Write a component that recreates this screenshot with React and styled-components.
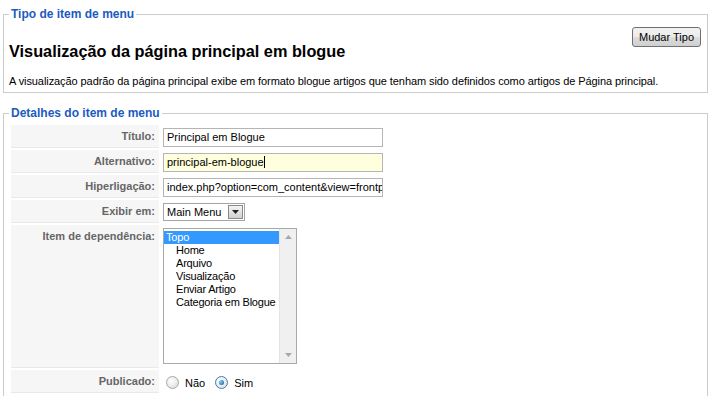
import React from 'react';
import styled, { createGlobalStyle } from 'styled-components';

const GlobalStyle = createGlobalStyle`
  html, body {
    margin: 0;
    padding: 0;
    background: #fff;
  }
  body {
    font-family: 'Liberation Sans', Arial, sans-serif;
    font-size: 11px;
    color: #000;
  }
`;

const Page = styled.div`
  width: 705px;
  margin-left: 3px;
  padding-top: 7px;
`;

const Fieldset = styled.fieldset`
  margin: 0 0 13px 0;
  padding: 0 5px ${(p) => (p.open ? '20px' : '0')} 5px;
  border: 1px solid #cccccc;
  min-width: 0;
`;

const Legend = styled.legend`
  padding: 0 2px;
  font-size: 12px;
  line-height: 14px;
  font-weight: bold;
  color: #1b5bbf;
`;

const TypeHead = styled.div`
  display: flex;
  justify-content: space-between;
  align-items: flex-start;
  padding: 6px 1px 0 0;
`;

const Title = styled.h1`
  margin: 14px 0 0 0;
  font-size: 16.3px;
  line-height: 20px;
  font-weight: bold;
`;

const Button = styled.button`
  height: 20px;
  padding: 0 6px;
  font-family: 'Liberation Sans', Arial, sans-serif;
  font-size: 11px;
  color: #000;
  border: 1px solid #707070;
  border-radius: 3px;
  background: linear-gradient(#f2f2f2 0%, #ebebeb 50%, #dddddd 51%, #cfcfcf 100%);
`;

const Description = styled.p`
  margin: 14px 0 0 0;
  padding-bottom: 4px;
  line-height: 13px;
  letter-spacing: -0.08px;
`;

const Form = styled.div`
  display: grid;
  grid-template-columns: 148px 1fr;
  row-gap: 2px;
  padding: 5px 0 0 2px;
`;

const Key = styled.div`
  background: #f6f6f6;
  border-bottom: 1px solid #e9e9e9;
  color: #666;
  font-weight: bold;
  text-align: right;
  padding: 5px 4px 0 0;
  min-height: 17px;
  height: ${(p) => (p.tall ? '137px' : 'auto')};
`;

const Value = styled.div`
  padding: 3px 0 0 4px;
  display: flex;
  align-items: flex-start;
`;

const TextInput = styled.div`
  box-sizing: border-box;
  width: 220px;
  height: 19px;
  border: 1px solid #b5b5b5;
  background: ${(p) => (p.focus ? '#ffffdd' : '#fff')};
  padding: 2px 2px 0 3px;
  white-space: nowrap;
  overflow: hidden;
  line-height: 13px;
`;

const Caret = styled.span`
  display: inline-block;
  width: 1px;
  height: 12px;
  background: #000;
  vertical-align: -2px;
`;

const Select = styled.div`
  box-sizing: border-box;
  width: 82px;
  height: 18px;
  border: 1px solid #a5a5a5;
  display: flex;
  align-items: center;
  justify-content: space-between;
  padding-left: 3px;
`;

const SelectArrow = styled.div`
  width: 15px;
  height: 14px;
  margin-right: 1px;
  border: 1px solid #8a8a8a;
  box-sizing: border-box;
  background: linear-gradient(#f4f4f4, #d0d0d0);
  display: flex;
  align-items: center;
  justify-content: center;
`;

const ListBox = styled.div`
  box-sizing: border-box;
  width: 134px;
  height: 136px;
  border: 1px solid #a9a9a9;
  display: flex;
`;

const ListItems = styled.div`
  flex: 1;
  padding-top: 2px;
  overflow: hidden;
`;

const ListItem = styled.div`
  height: 13px;
  line-height: 13px;
  white-space: nowrap;
  letter-spacing: -0.2px;
  padding-left: ${(p) => (p.child ? '12px' : '2px')};
  background: ${(p) => (p.selected ? '#3399ff' : 'transparent')};
  color: ${(p) => (p.selected ? '#fff' : '#000')};
`;

const Scrollbar = styled.div`
  width: 16px;
  background: #f0f0f0;
  border-left: 1px solid #e4e4e4;
  display: flex;
  flex-direction: column;
  justify-content: space-between;
  align-items: center;
  padding: 6px 0;
`;

const Radios = styled.div`
  display: flex;
  align-items: center;
  gap: 6px;
  padding: 3px 0 0 3px;
`;

const Radio = styled.span`
  box-sizing: border-box;
  width: 13px;
  height: 13px;
  border-radius: 50%;
  border: 1px solid ${(p) => (p.checked ? '#3c7fb1' : '#a8a8a8')};
  background: radial-gradient(circle at 40% 35%, #ffffff, #d8d8d8);
  display: flex;
  align-items: center;
  justify-content: center;
  &::after {
    content: '';
    display: ${(p) => (p.checked ? 'block' : 'none')};
    width: 5px;
    height: 5px;
    border-radius: 50%;
    background: radial-gradient(circle at 35% 35%, #7ed0ff, #0c4f8c);
  }
`;

const RadioLabel = styled.span`
  margin-right: 4px;
`;

const Arrow = ({ up, dark }) => (
  <svg width="7" height="4" viewBox="0 0 7 4">
    <path
      d={up ? 'M0 4 L3.5 0 L7 4 Z' : 'M0 0 L3.5 4 L7 0 Z'}
      fill={dark ? '#222' : '#a8a8a8'}
    />
  </svg>
);

const parents = ['Home', 'Arquivo', 'Visualização', 'Enviar Artigo', 'Categoria em Blogue'];

export default function App() {
  return (
    <>
      <GlobalStyle />
      <Page>
        <Fieldset>
          <Legend>Tipo de item de menu</Legend>
          <TypeHead>
            <Title>Visualização da página principal em blogue</Title>
            <Button>Mudar Tipo</Button>
          </TypeHead>
          <Description>
            A visualização padrão da página principal exibe em formato blogue artigos que tenham sido definidos como artigos de Página principal.
          </Description>
        </Fieldset>

        <Fieldset open>
          <Legend>Detalhes do item de menu</Legend>
          <Form>
            <Key>Título:</Key>
            <Value>
              <TextInput>Principal em Blogue</TextInput>
            </Value>

            <Key>Alternativo:</Key>
            <Value>
              <TextInput focus>
                principal-em-blogue<Caret />
              </TextInput>
            </Value>

            <Key>Hiperligação:</Key>
            <Value>
              <TextInput>index.php?option=com_content&amp;view=frontpage</TextInput>
            </Value>

            <Key>Exibir em:</Key>
            <Value>
              <Select>
                Main Menu
                <SelectArrow>
                  <Arrow dark />
                </SelectArrow>
              </Select>
            </Value>

            <Key tall>Item de dependência:</Key>
            <Value>
              <ListBox>
                <ListItems>
                  <ListItem selected>Topo</ListItem>
                  {parents.map((p) => (
                    <ListItem child key={p}>
                      {p}
                    </ListItem>
                  ))}
                </ListItems>
                <Scrollbar>
                  <Arrow up />
                  <Arrow />
                </Scrollbar>
              </ListBox>
            </Value>

            <Key>Publicado:</Key>
            <Value>
              <Radios>
                <Radio />
                <RadioLabel>Não</RadioLabel>
                <Radio checked />
                <RadioLabel>Sim</RadioLabel>
              </Radios>
            </Value>
          </Form>
        </Fieldset>
      </Page>
    </>
  );
}
